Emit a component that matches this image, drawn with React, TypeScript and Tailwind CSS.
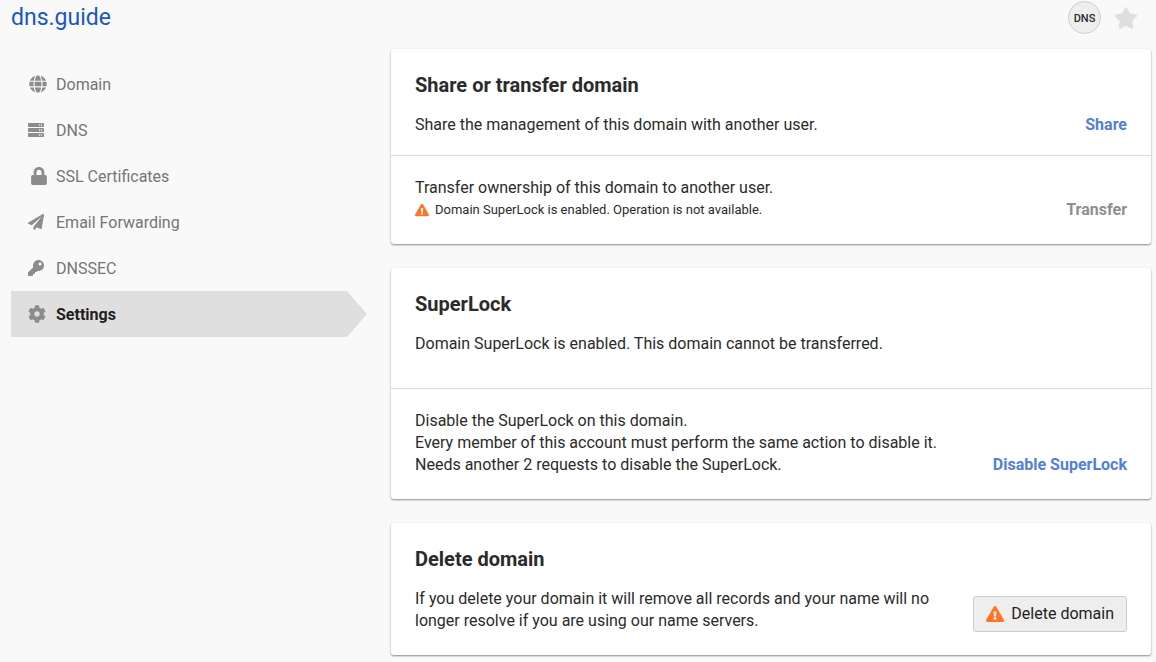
import type { ReactNode } from "react";
import type { IconType } from "react-icons";
import {
  FaCog,
  FaExclamationTriangle,
  FaGlobe,
  FaKey,
  FaLock,
  FaPaperPlane,
  FaServer,
  FaStar,
} from "react-icons/fa";

type NavItem = { label: string; icon: IconType; iconClass: string; active?: boolean };

const navItems: NavItem[] = [
  { label: "Domain", icon: FaGlobe, iconClass: "ml-px size-[18px]" },
  { label: "DNS", icon: FaServer, iconClass: "size-4" },
  { label: "SSL Certificates", icon: FaLock, iconClass: "ml-0.5 size-[18px]" },
  { label: "Email Forwarding", icon: FaPaperPlane, iconClass: "size-4" },
  { label: "DNSSEC", icon: FaKey, iconClass: "size-4" },
  { label: "Settings", icon: FaCog, iconClass: "size-[18px]", active: true },
];

function Card({ title, children }: { title: string; children: ReactNode }) {
  return (
    <section className="rounded-[3px] bg-white shadow-[0_1px_2px_rgba(0,0,0,0.45)]">
      <h2 className="px-6 pt-6 pb-[17px] text-xl leading-6 font-bold">{title}</h2>
      {children}
    </section>
  );
}

function Row({ className, children }: { className: string; children: ReactNode }) {
  return <div className={`flex items-end justify-between gap-6 px-6 ${className}`}>{children}</div>;
}

export default function App() {
  return (
    <div className="min-h-screen bg-[#f9f9f9] pr-[5px] pb-[7px] pl-[11px] font-[Roboto,sans-serif] text-base leading-[22px] text-[#2b2b2b]">
      <header className="flex h-[49px] items-start justify-between pr-[13px]">
        <h1 className="pt-1 text-[23px] leading-7">
          <a href="#domain" className="text-[#1a56c4]">dns.guide</a>
        </h1>
        <div className="flex items-center gap-[13px] pt-px">
          <span className="flex size-[33px] items-center justify-center rounded-full border border-[#cfcfcf] bg-[#eeeeee] pt-0.5 text-[11px] font-medium">
            DNS
          </span>
          <button type="button" aria-label="Add to favorites" className="text-[#dfdfdf]">
            <FaStar className="size-6" />
          </button>
        </div>
      </header>

      <div className="grid grid-cols-[1fr_2fr] items-start">
        <nav className="pt-3 pr-6">
          <ul>
            {navItems.map(({ label, icon: Icon, iconClass, active }) => (
              <li key={label}>
                <a
                  href="#settings"
                  aria-current={active ? "page" : undefined}
                  className={
                    active
                      ? "flex h-[46px] items-center bg-[#dfdfdf] pl-[17px] font-bold text-[#1f1f1f] [clip-path:polygon(0_0,calc(100%-20px)_0,100%_50%,calc(100%-20px)_100%,0_100%)]"
                      : "flex h-[46px] items-center pl-[17px] text-[#757575]"
                  }
                >
                  <span className="w-7 text-[#8c8c8c]">
                    <Icon className={iconClass} />
                  </span>
                  <span className="pt-0.5">{label}</span>
                </a>
              </li>
            ))}
          </ul>
        </nav>

        <main className="flex flex-col gap-6">
          <Card title="Share or transfer domain">
            <Row className="pb-[19px]">
              <p>Share the management of this domain with another user.</p>
              <button type="button" className="font-bold text-[#5380d3]">Share</button>
            </Row>
            <Row className="border-t border-[#dcdcdc] pt-[21px] pb-[23px]">
              <div>
                <p>Transfer ownership of this domain to another user.</p>
                <p className="flex items-center gap-[6px] text-[13px] leading-[22px]">
                  <FaExclamationTriangle className="size-[14px] text-[#ff7426]" />
                  Domain SuperLock is enabled. Operation is not available.
                </p>
              </div>
              <button type="button" disabled className="font-bold text-[#8f8f8f]">Transfer</button>
            </Row>
          </Card>

          <Card title="SuperLock">
            <Row className="pb-[33px]">
              <p>Domain SuperLock is enabled. This domain cannot be transferred.</p>
            </Row>
            <Row className="border-t border-[#dcdcdc] pt-[21px] pb-[23px]">
              <p>
                Disable the SuperLock on this domain.
                <br />
                Every member of this account must perform the same action to disable it.
                <br />
                Needs another 2 requests to disable the SuperLock.
              </p>
              <button type="button" className="shrink-0 font-bold text-[#5380d3]">Disable SuperLock</button>
            </Row>
          </Card>

          <Card title="Delete domain">
            <Row className="pb-[23px]">
              <p>
                If you delete your domain it will remove all records and your name will no longer
                resolve if you are using our name servers.
              </p>
              <button
                type="button"
                className="flex h-9 shrink-0 items-center gap-[7px] rounded-[3px] border border-[#cccccc] bg-[#eeeeee] px-3 text-[#1f1f1f]"
              >
                <FaExclamationTriangle className="size-[18px] text-[#ff7426]" />
                Delete domain
              </button>
            </Row>
          </Card>
        </main>
      </div>
    </div>
  );
}
